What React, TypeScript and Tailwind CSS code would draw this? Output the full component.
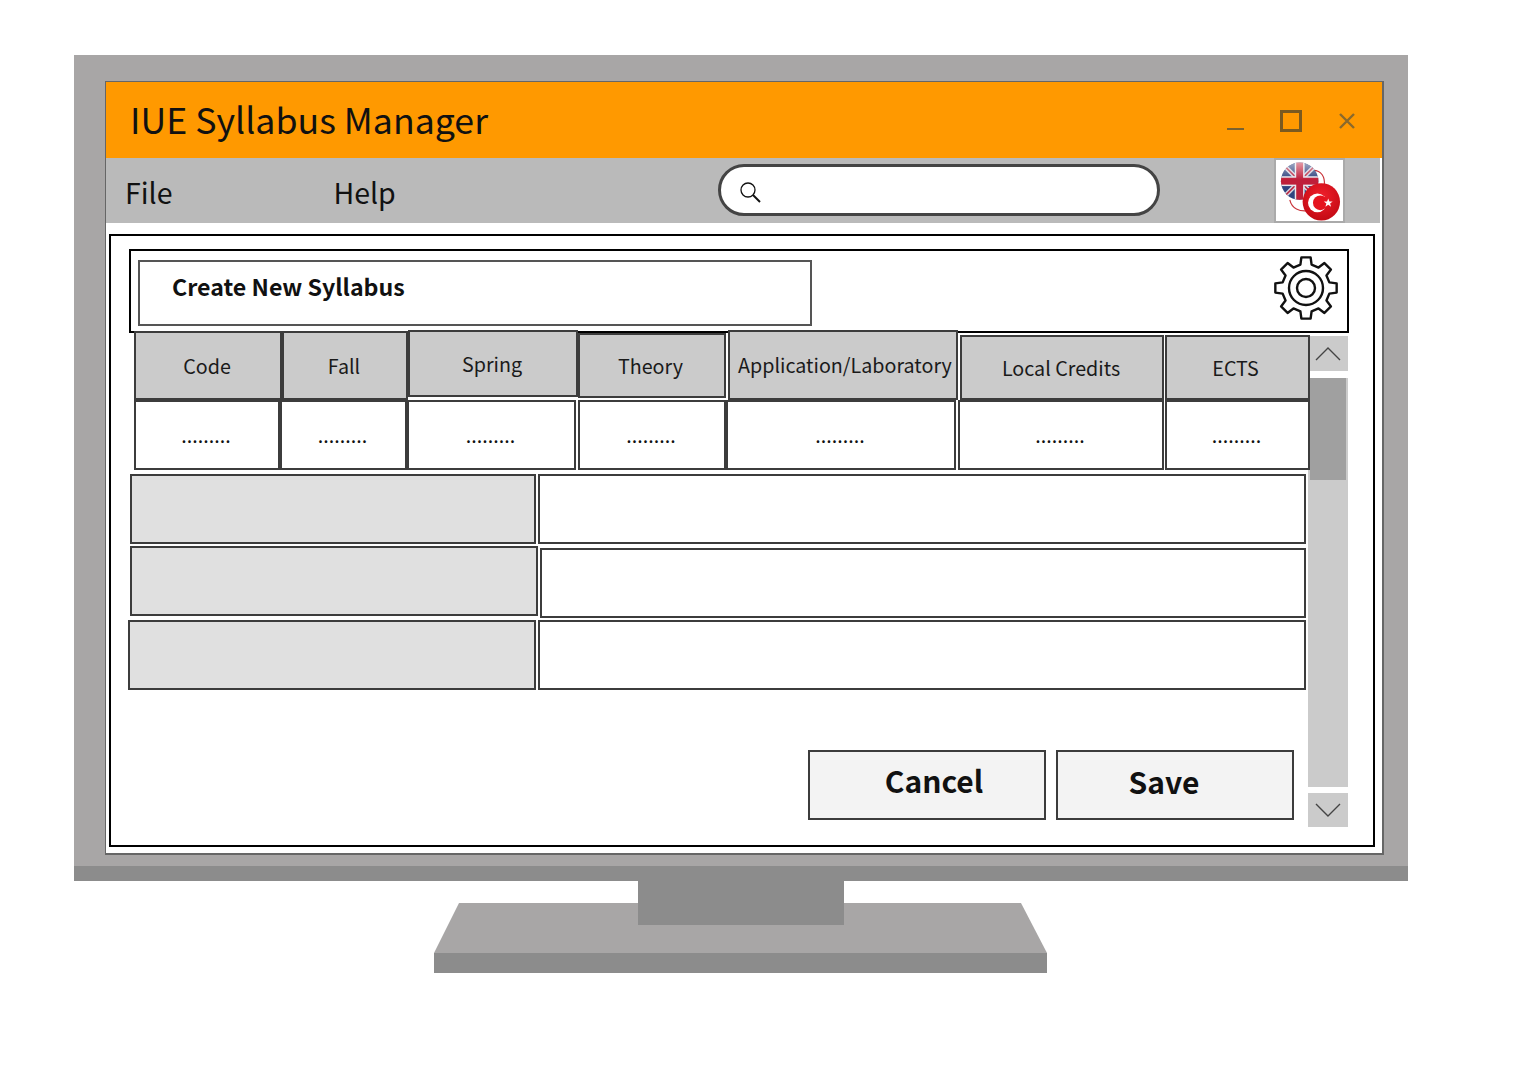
import React from "react";

const FONT = '"Noto Sans CJK JP", "Noto Sans", sans-serif';

function gearPath(cx: number, cy: number, ro: number, ri: number, teeth: number) {
  const pts: string[] = [];
  const step = (Math.PI * 2) / teeth;
  for (let i = 0; i < teeth; i++) {
    const a = i * step - Math.PI / 2;
    const w1 = step * 0.3;
    const w2 = step * 0.19;
    const p = (r: number, t: number) =>
      `${(cx + r * Math.cos(t)).toFixed(2)} ${(cy + r * Math.sin(t)).toFixed(2)}`;
    pts.push(p(ri, a - w1), p(ro, a - w2), p(ro, a + w2), p(ri, a + w1));
  }
  return "M" + pts.join("L") + "Z";
}

function Gear() {
  return (
    <svg className="mt-[-6px]" width="66" height="66" viewBox="0 0 66 66" fill="none" stroke="#111" strokeWidth="2.4" strokeLinejoin="round">
      <path d={gearPath(33, 33, 31, 24, 8)} />
      <circle cx="33" cy="33" r="17" />
      <circle cx="33" cy="33" r="9" />
    </svg>
  );
}

function Flags() {
  return (
    <svg className="mt-[3px] ml-[2px]" width="66" height="60" viewBox="0 0 66 60">
      <defs>
        <clipPath id="uk"><circle cx="22" cy="19" r="19" /></clipPath>
        <radialGradient id="tr" cx="0.5" cy="0.35" r="0.7">
          <stop offset="0" stopColor="#f0202c" />
          <stop offset="1" stopColor="#c00812" />
        </radialGradient>
        <linearGradient id="gloss" x1="0" y1="0" x2="0" y2="1">
          <stop offset="0" stopColor="#fff" stopOpacity="0.55" />
          <stop offset="0.45" stopColor="#fff" stopOpacity="0" />
        </linearGradient>
      </defs>
      <path d="M36 8 C44 8 48 15 47 23" fill="none" stroke="#c9343a" strokeWidth="1.2" />
      <path d="M12 38 C14 47 22 50 30 49" fill="none" stroke="#c9343a" strokeWidth="1.2" />
      <g clipPath="url(#uk)">
        <rect x="0" y="0" width="44" height="38" fill="#2f437f" />
        <path d="M3 0 L41 38 M41 0 L3 38" stroke="#d8d8e2" strokeWidth="4.5" />
        <path d="M3 0 L41 38 M41 0 L3 38" stroke="#b92a44" strokeWidth="1.6" />
        <rect x="17" y="0" width="10" height="38" fill="#e8e8ee" />
        <rect x="0" y="14" width="44" height="10" fill="#e8e8ee" />
        <rect x="18.5" y="0" width="7" height="38" fill="#bf1f3a" />
        <rect x="0" y="15.5" width="44" height="7" fill="#bf1f3a" />
        <circle cx="22" cy="19" r="19" fill="url(#gloss)" />
      </g>
      <circle cx="44" cy="40" r="19" fill="url(#tr)" />
      <circle cx="40" cy="41" r="9.5" fill="#fff" />
      <circle cx="43" cy="41" r="7.5" fill="#e5141f" />
      <polygon points="51,36.5 52.2,39.6 55.5,39.6 52.9,41.7 53.9,45 51,43 48.1,45 49.1,41.7 46.5,39.6 49.8,39.6" fill="#fff" />
    </svg>
  );
}

function Head({ w, h, mt, ml, label, shift = -2 }: { w: number; h: number; mt: number; ml?: number; label: string; shift?: number }) {
  return (
    <div
      className="shrink-0 flex items-center justify-center bg-[#cbcbcb] border-2 border-[#3c3c3c] text-[19.7px] text-[#1a1a1a] leading-none"
      style={{ width: w, height: h, marginTop: mt, marginLeft: ml ?? 0, paddingLeft: shift > 0 ? shift : 0, paddingRight: shift < 0 ? -shift : 0 }}
    >
      {label}
    </div>
  );
}

function Val({ w, ml }: { w: number; ml?: number }) {
  return (
    <div
      className="shrink-0 h-[70px] flex items-center justify-center bg-white border-2 border-[#3c3c3c] text-[19.7px] text-[#111] leading-none pr-[2px]"
      style={{ width: w, marginLeft: ml ?? 0 }}
    >
      <span>.........</span>
    </div>
  );
}

function Row({ gap, gw, ww, mt, ml, wt = 0 }: { gap: number; gw: number; ww: number; mt: number; ml: number; wt?: number }) {
  return (
    <div className="flex h-[70px]" style={{ marginTop: mt, marginLeft: ml }}>
      <div className="shrink-0 h-[70px] bg-[#e0e0e0] border-2 border-[#3c3c3c]" style={{ width: gw }} />
      <div className="shrink-0 h-[70px] bg-white border-2 border-[#3c3c3c]" style={{ width: ww, marginLeft: gap, marginTop: wt }} />
    </div>
  );
}

export default function App() {
  return (
    <div className="relative w-[1531px] h-[1068px] bg-white overflow-hidden pt-[55px] pl-[74px]" style={{ fontFamily: FONT }}>
      <div className="w-[1334px] h-[826px] bg-[#a8a6a6] border-b-[15px] border-[#8c8c8c] pt-[26px] pl-[31px]">
        <div className="w-[1279px] h-[774px] bg-white border-t border-l border-r-2 border-b-2 border-[#666]">
          <div className="h-[76px] bg-[#ff9900] flex items-center pl-[24px] pr-[27px]">
            <span className="text-[35.7px] leading-none text-[#111] mt-[-3px]">IUE Syllabus Manager</span>
            <div className="ml-auto flex items-start h-[30px]">
              <div className="w-[17px] h-[2px] bg-[#7a6230] mt-[23px]" />
              <div className="w-[22px] h-[22px] border-[3px] border-[#7a5a20] ml-[36px] mt-[5px]" />
              <svg className="ml-[37px] mt-[8px]" width="16" height="16" viewBox="0 0 16 16" stroke="#8a6a2c" strokeWidth="2.4">
                <path d="M1 1 L15 15 M15 1 L1 15" />
              </svg>
            </div>
          </div>
          <div className="w-[1274px] h-[65px] bg-[#bababa] flex items-center">
            <span className="ml-[19px] text-[28.5px] leading-none text-[#111] mt-[4px]">File</span>
            <span className="ml-[161px] text-[28.5px] leading-none text-[#111] mt-[4px]">Help</span>
            <div className="ml-[322px] w-[442px] h-[52px] mt-[-1px] rounded-[26px] bg-white border-[3px] border-[#444] flex items-center pl-[18px]">
              <svg className="mt-[6px]" width="24" height="24" viewBox="0 0 24 24" fill="none" stroke="#111">
                <circle cx="9" cy="9" r="7" strokeWidth="1.3" />
                <path d="M14 14 L21 21" strokeWidth="2" />
              </svg>
            </div>
            <div className="ml-[114px] w-[71px] h-[65px] bg-white border-2 border-[#aaa] flex items-center justify-center">
              <Flags />
            </div>
          </div>
          <div className="w-[1266px] h-[613px] ml-[3px] mt-[11px] border-2 border-black">
            <div className="ml-[18px] mt-[13px] w-[1220px] h-[84px] border-2 border-black flex items-center justify-between pl-[7px] pr-[8px]">
              <div className="w-[674px] h-[66px] mt-[4px] bg-white border-2 border-[#555] flex items-center pl-[32px]">
                <span className="text-[23.2px] font-bold leading-none text-[#111] mt-[-12px]">Create New Syllabus</span>
              </div>
              <Gear />
            </div>
            <div className="flex">
              <div className="relative z-10 w-[1197px] shrink-0">
                <div className="flex ml-[23px] mt-[-2px] h-[69px]">
                  <Head w={148} h={69} mt={0} label="Code" />
                  <Head w={126} h={69} mt={0} label="Fall" />
                  <Head w={170} h={67} mt={-1} label="Spring" />
                  <Head w={148} h={65} mt={2} label="Theory" shift={-3} />
                  <Head w={230} h={70} mt={-1} ml={2} label="Application/Laboratory" shift={4} />
                  <Head w={204} h={65} mt={4} ml={2} label="Local Credits" />
                  <Head w={145} h={65} mt={4} ml={1} label="ECTS" shift={-4} />
                </div>
                <div className="flex ml-[23px]">
                  <Val w={146} />
                  <Val w={127} />
                  <Val w={169} />
                  <Val w={148} ml={2} />
                  <Val w={230} />
                  <Val w={206} ml={2} />
                  <Val w={145} ml={1} />
                </div>
                <Row ml={19} mt={4} gw={406} gap={2} ww={768} />
                <Row ml={19} mt={2} gw={408} gap={2} ww={766} wt={2} />
                <Row ml={17} mt={4} gw={408} gap={2} ww={768} />
                <div className="flex justify-end gap-[10px] mt-[60px] mr-[14px]">
                  <button className="w-[238px] h-[70px] bg-[#f3f3f3] border-2 border-[#3c3c3c] text-[30px] font-bold leading-none text-[#111] pl-[14px] pb-[10px]">Cancel</button>
                  <button className="w-[238px] h-[70px] bg-[#f3f3f3] border-2 border-[#3c3c3c] text-[30px] font-bold leading-none text-[#111] pr-[22px] pb-[8px]">Save</button>
                </div>
              </div>
              <div className="w-[40px] shrink-0 mt-[3px] flex flex-col">
                <div className="h-[35px] bg-[#cbcbcb] flex items-center justify-center">
                  <svg width="26" height="16" viewBox="0 0 26 16" fill="none" stroke="#444" strokeWidth="1.4"><path d="M1 14 L13 2 L25 14" /></svg>
                </div>
                <div className="h-[409px] mt-[7px] bg-[#cbcbcb] px-[2px]">
                  <div className="h-[102px] bg-[#a0a0a0]" />
                </div>
                <div className="h-[34px] mt-[6px] bg-[#cbcbcb] flex items-center justify-center">
                  <svg width="26" height="16" viewBox="0 0 26 16" fill="none" stroke="#444" strokeWidth="1.4"><path d="M1 2 L13 14 L25 2" /></svg>
                </div>
              </div>
            </div>
          </div>
        </div>
      </div>
      <svg className="ml-[360px]" width="614" height="92" viewBox="0 0 614 92">
        <path d="M25 22 H587 L613 72 H0 Z" fill="#a8a6a6" />
        <rect x="0" y="72" width="613" height="20" fill="#8c8c8c" />
        <rect x="204" y="0" width="206" height="44" fill="#8c8c8c" />
      </svg>
    </div>
  );
}
